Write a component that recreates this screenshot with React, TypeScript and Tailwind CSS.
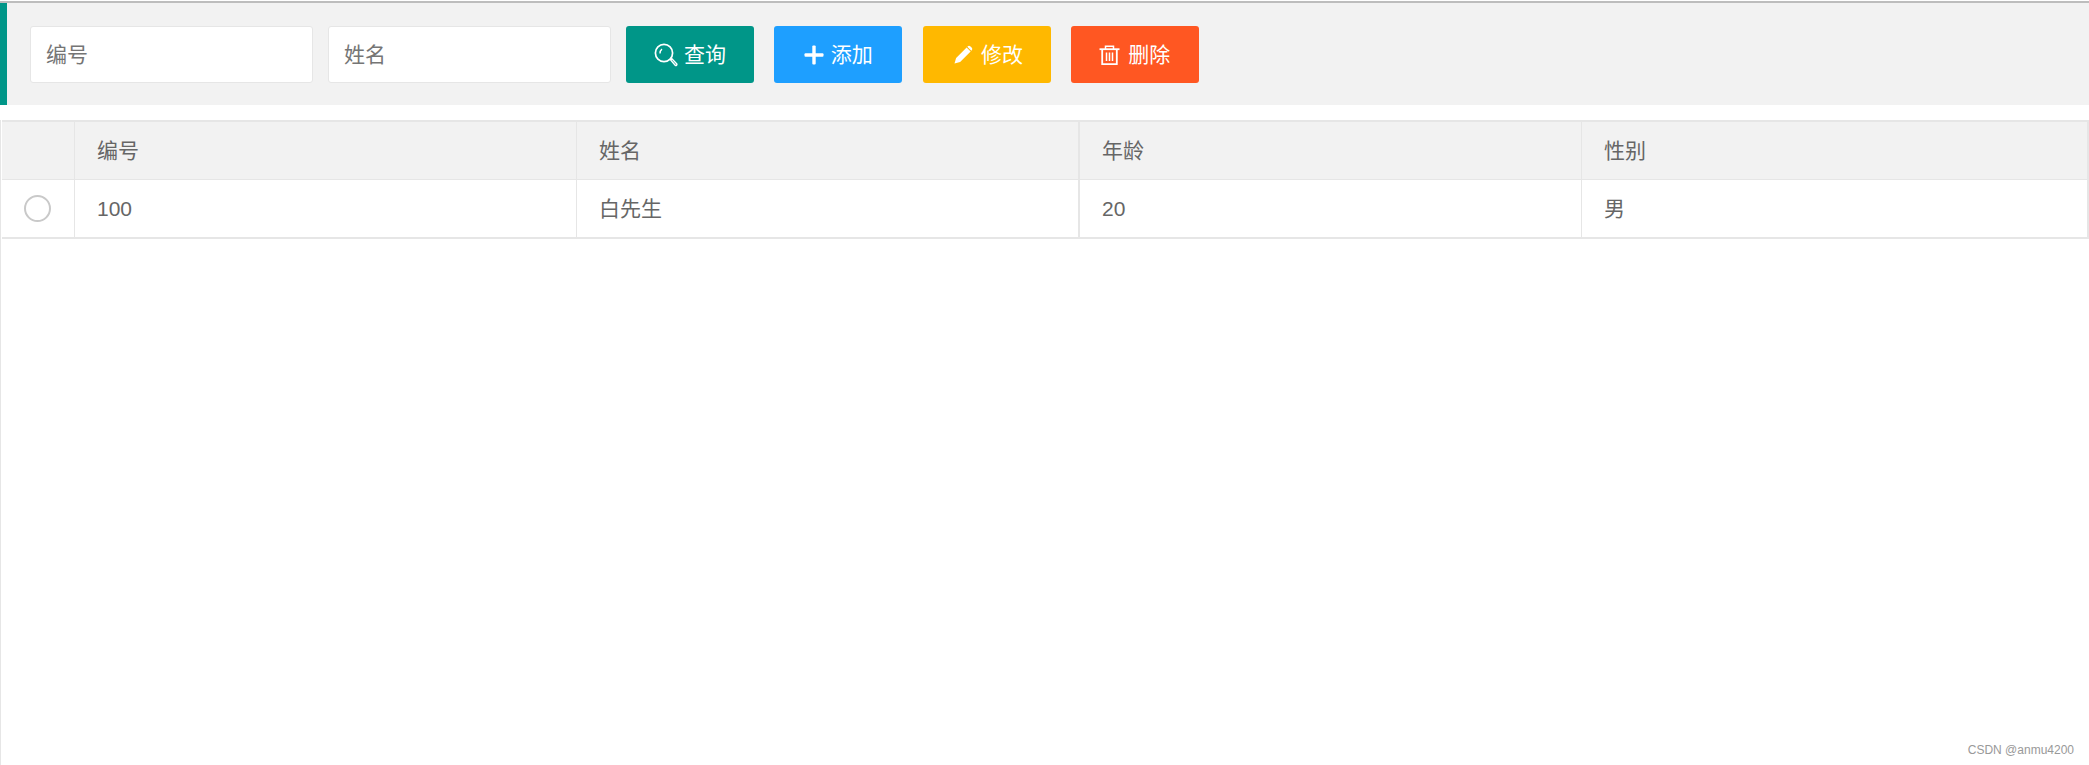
import React from 'react';

const font = { fontFamily: '"Liberation Sans", "Noto Sans CJK SC", sans-serif' };

function SearchIcon() {
  return (
    <svg width="24" height="24" viewBox="0 0 24 24" fill="none" stroke="white" className="shrink-0">
      <circle cx="10" cy="10" r="8.6" strokeWidth="1.7" />
      <path d="M6 10.5c0-2 .6-3.400 2-4.400" strokeWidth="1.4" />
      <path d="M16.400 16.600l1.400-1 4.800 5.200c.4.500.4 1 0 1.400-.4.400-1 .4-1.400 0z" strokeWidth="1.4" />
    </svg>
  );
}

function PlusIcon() {
  return (
    <svg width="20" height="20" viewBox="0 0 20 20" fill="white" className="shrink-0">
      <rect x="8.300" y="0.500" width="3.400" height="19" rx="1" />
      <rect x="0.500" y="8.300" width="19" height="3.400" rx="1" />
    </svg>
  );
}

function PencilIcon() {
  return (
    <svg width="19" height="19" viewBox="0 0 19 19" fill="white" className="shrink-0">
      <path d="M0.500 18.500l1.600-5.600L12.600 2.400l4 4L6.100 16.900z" />
      <path d="M13.600 1.400c.9-.9 2-.9 2.900 0l1.100 1.100c.9.900.9 2 0 2.900l-.3.3-4-4z" />
    </svg>
  );
}

function TrashIcon() {
  return (
    <svg width="21" height="20" viewBox="0 0 21 20" fill="none" stroke="white" strokeWidth="1.5" className="shrink-0">
      <path d="M0.500 4.200h20" strokeWidth="1.800" />
      <path d="M6.500 4V1.200h8V4" />
      <path d="M3.200 4.500v14.700h14.600V4.500" strokeWidth="1.800" />
      <path d="M7.500 7.500v8.500M10.500 7.500v8.500M13.500 7.500v8.500" />
    </svg>
  );
}

const buttons = [
  { label: '查询', icon: <SearchIcon />, color: 'bg-[#009688]', extra: 'gap-[6px]' },
  { label: '添加', icon: <PlusIcon />, color: 'bg-[#1e9fff]', extra: 'gap-[7px]' },
  { label: '修改', icon: <PencilIcon />, color: 'bg-[#ffb800]', extra: 'gap-[8px] pl-[4px]' },
  { label: '删除', icon: <TrashIcon />, color: 'bg-[#ff5722]', extra: 'gap-[8px]' },
];

const columns = ['编号', '姓名', '年龄', '性别'];
const row = ['100', '白先生', '20', '男'];
const seps = ['border-r', 'border-r-2', 'border-r', 'border-r-2'];

export default function App() {
  return (
    <div className="relative h-[765px] w-[2089px] overflow-hidden bg-white text-[21px] text-[#666]" style={font}>
      <div className="mt-[1px] h-[2px] bg-[#bdbdbd]" />

      {/* toolbar */}
      <div className="flex h-[102px] items-start border-l-[7px] border-[#009688] bg-[#f2f2f2] pl-[23px] pt-[23px]">
        <input
          placeholder="编号"
          className="h-[57px] w-[283px] rounded-[3px] border border-[#e6e6e6] bg-white px-[15px] text-[21px] placeholder:text-[#757575]"
        />
        <input
          placeholder="姓名"
          className="ml-[15px] h-[57px] w-[283px] rounded-[3px] border border-[#e6e6e6] bg-white px-[15px] text-[21px] placeholder:text-[#757575]"
        />
        <div className="ml-[15px] flex gap-[20.25px]">
          {buttons.map((b) => (
            <button
              key={b.label}
              className={`flex h-[57px] w-[128px] items-center justify-center rounded-[3px] text-white ${b.color} ${b.extra}`}
            >
              {b.icon}
              <span>{b.label}</span>
            </button>
          ))}
        </div>
      </div>

      {/* table */}
      <div className="mt-[15px] h-[645px] border-l border-[#e6e6e6] pl-[1px]">
        <div className="border-t-2 border-[#e6e6e6]">
          <div className="grid h-[58px] grid-cols-[73px_502px_503px_502px_507px] border-b border-[#e6e6e6] bg-[#f2f2f2]">
            <div className="border-r border-[#e6e6e6]" />
            {columns.map((c, i) => (
              <div key={c} className={`flex items-center border-[#e6e6e6] pl-[22px] ${seps[i]}`}>
                {c}
              </div>
            ))}
          </div>
          <div className="grid h-[59px] grid-cols-[73px_502px_503px_502px_507px] border-b-2 border-[#e6e6e6]">
            <div className="flex items-center justify-center border-r border-[#e6e6e6]">
              <div className="ml-[-2px] h-[27px] w-[27px] rounded-full border-2 border-[#c9c9c9]" />
            </div>
            {row.map((c, i) => (
              <div key={c} className={`flex items-center border-[#e6e6e6] pl-[22px] ${seps[i]}`}>
                {c}
              </div>
            ))}
          </div>
        </div>
      </div>

      <div className="absolute right-[15px] top-[743px] text-[12px] leading-[15px] text-[#999]">CSDN @anmu4200</div>
    </div>
  );
}
